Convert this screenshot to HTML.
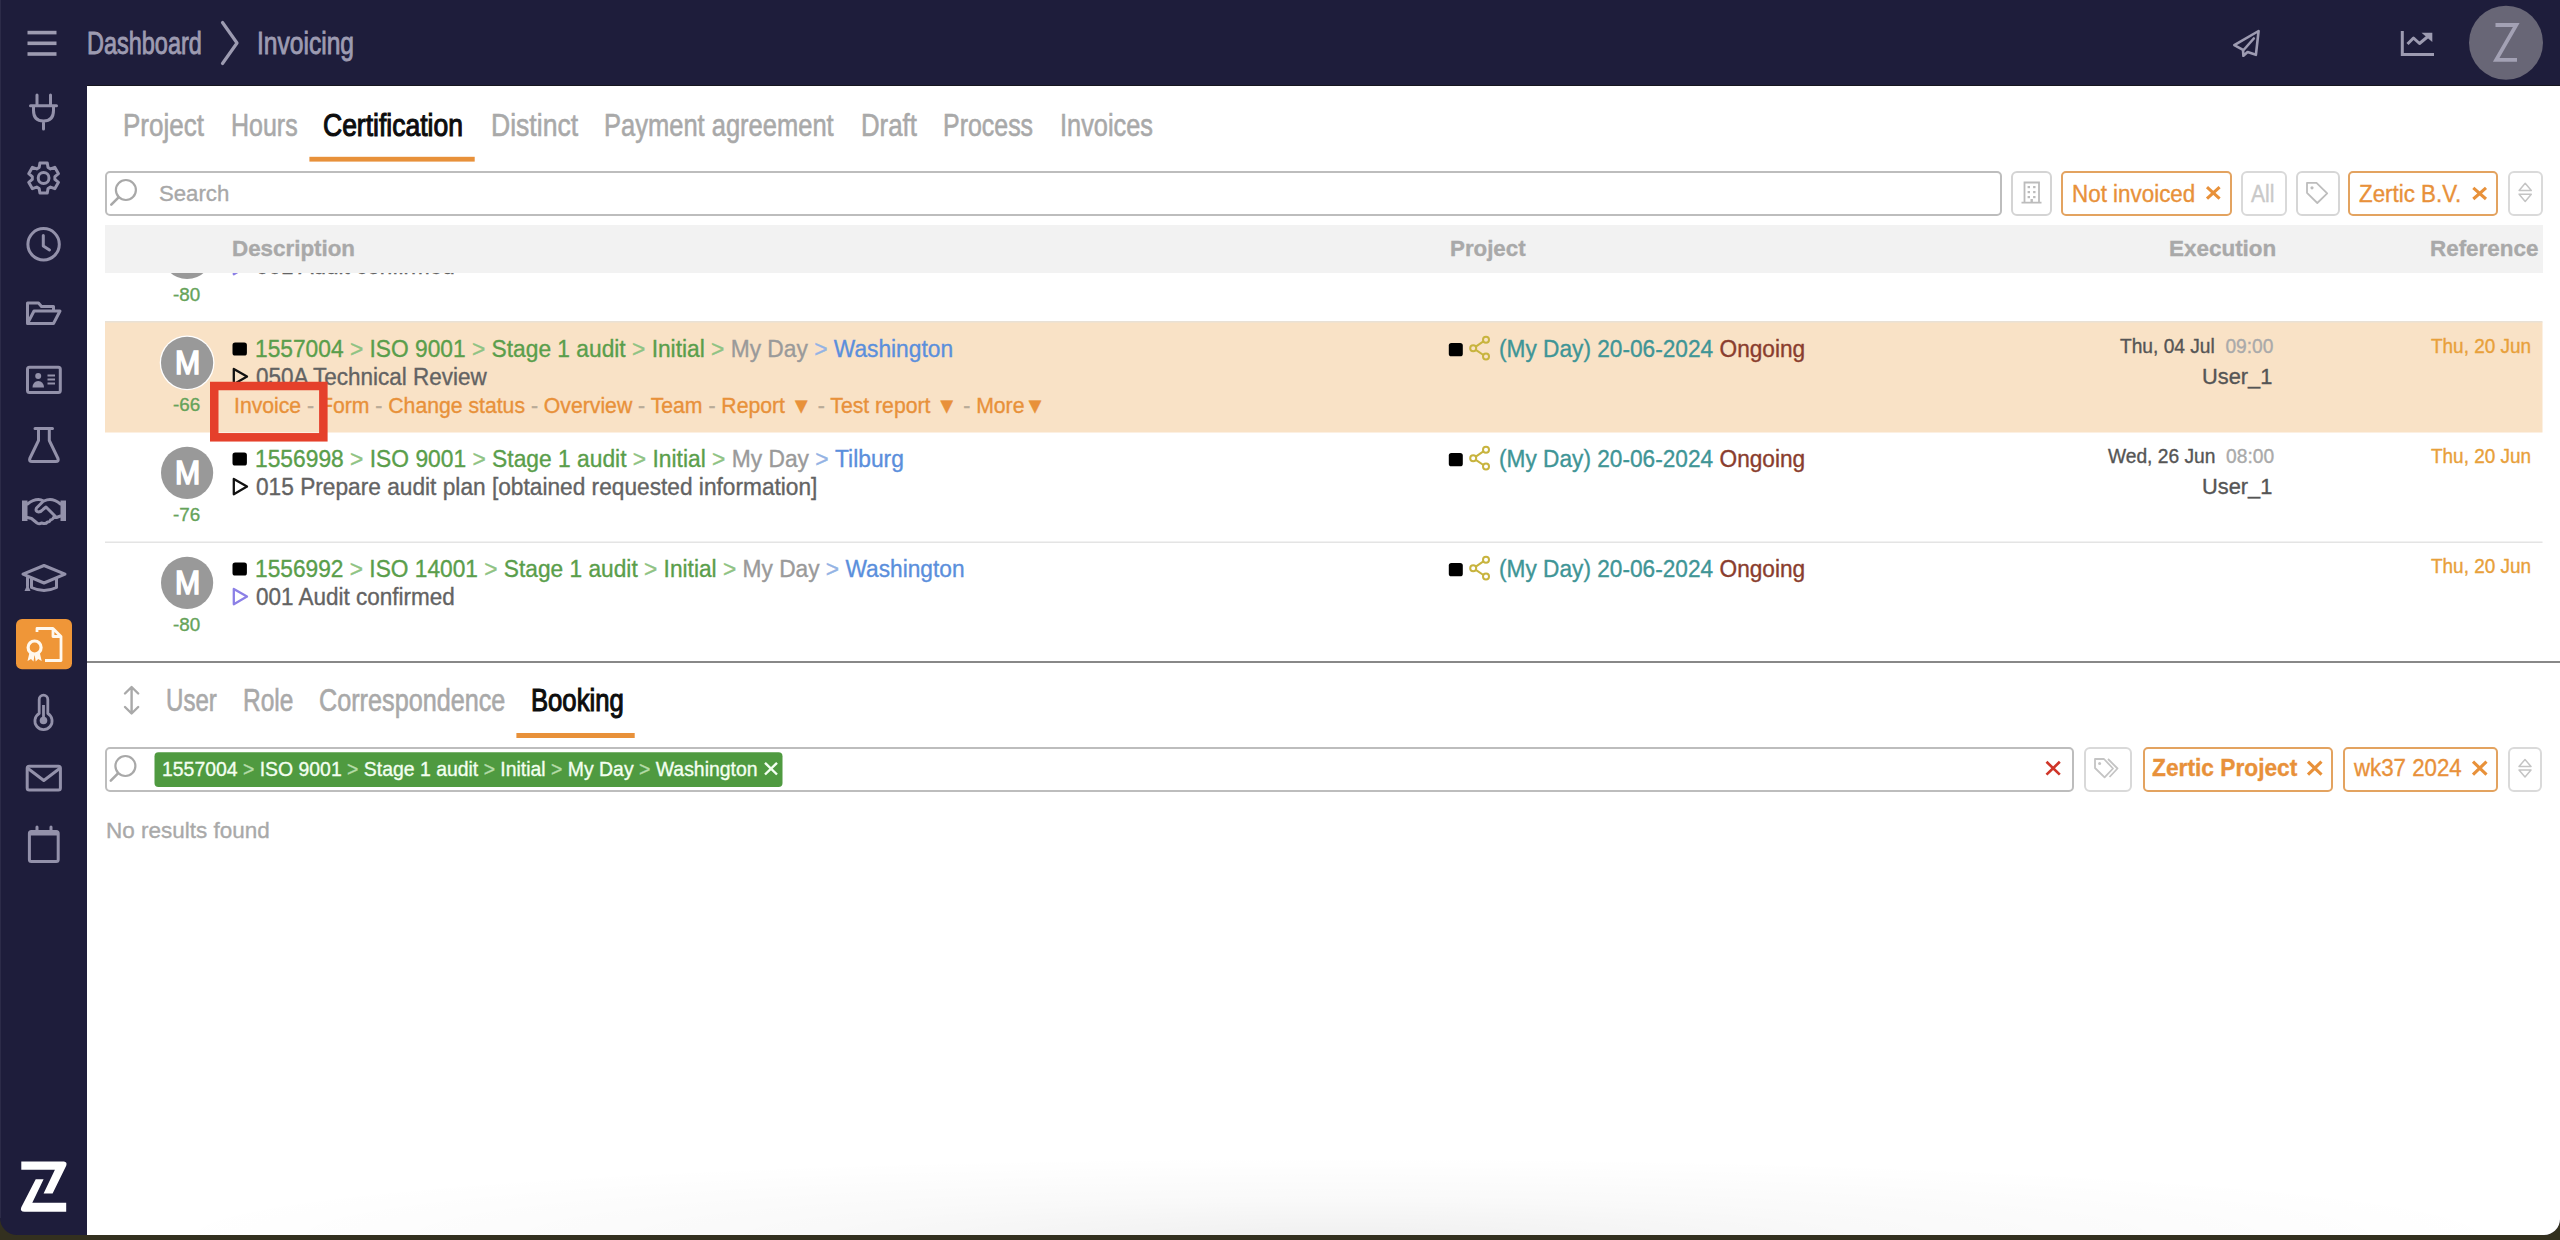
<!DOCTYPE html>
<html><head><meta charset="utf-8"><title>Invoicing</title><style>
*{margin:0;padding:0;box-sizing:content-box}
html,body{width:2560px;height:1240px;overflow:hidden;background:#33301f}
body{position:relative;font-family:"Liberation Sans",sans-serif}
.t{position:absolute;white-space:nowrap;line-height:1;transform-origin:0 0;-webkit-text-stroke-width:0.35px}
svg{position:absolute;left:0;top:0}
</style></head>
<body>
<div style="position:absolute;left:0;top:0;width:2560px;height:1235px;background:#1e1d3b;border-radius:0 0 16px 17px"></div>
<div style="position:absolute;left:0;top:0;width:1px;height:1218px;background:#2c2b48"></div><div style="position:absolute;left:87px;top:84.5px;width:2473px;height:1.5px;background:#17161f"></div>
<div style="position:absolute;left:87px;top:86px;width:2473px;height:1149px;background:#fff;border-radius:0 0 16px 0;overflow:hidden">
  <div style="position:absolute;left:100px;top:1070px;width:2300px;height:80px;background:radial-gradient(ellipse 52% 100% at 50% 100%,rgba(0,0,0,0.06) 0%,rgba(0,0,0,0.025) 45%,rgba(0,0,0,0) 100%)"></div>
</div>
<div style="position:absolute;left:105px;top:171px;width:1893.0px;height:40.5px;border:2px solid #bdbdbd;border-radius:5px;background:#fff"></div><div style="position:absolute;left:2011px;top:170.6px;width:37.0px;height:41.0px;border:2px solid #d4d4d4;border-radius:6px;background:#fff"></div><div style="position:absolute;left:2061px;top:171px;width:167.0px;height:40.5px;border:2px solid #e3a360;border-radius:5px;background:#fff"></div><div style="position:absolute;left:2241px;top:170.6px;width:42.0px;height:41.0px;border:2px solid #d9d9d9;border-radius:6px;background:#fff"></div><div style="position:absolute;left:2296px;top:170.6px;width:40.0px;height:41.0px;border:2px solid #d6d6d6;border-radius:6px;background:#fff"></div><div style="position:absolute;left:2348.4px;top:171px;width:145.8px;height:40.5px;border:2px solid #e3a360;border-radius:5px;background:#fff"></div><div style="position:absolute;left:2508px;top:170.6px;width:30.5px;height:41.0px;border:2px solid #dadada;border-radius:6px;background:#fff"></div><div style="position:absolute;left:105px;top:746.8px;width:1965.0px;height:41.0px;border:2px solid #bdbdbd;border-radius:5px;background:#fff"></div><div style="position:absolute;left:2084.2px;top:746.8px;width:44.1px;height:41.0px;border:2px solid #d9d9d9;border-radius:6px;background:#fff"></div><div style="position:absolute;left:2142.8px;top:746.8px;width:185.8px;height:41.0px;border:2px solid #e3a360;border-radius:5px;background:#fff"></div><div style="position:absolute;left:2343.2px;top:746.8px;width:150.7px;height:41.0px;border:2px solid #e3a360;border-radius:5px;background:#fff"></div><div style="position:absolute;left:2508.4px;top:746.8px;width:29.3px;height:41.0px;border:2px solid #dadada;border-radius:6px;background:#fff"></div>
<div style="position:absolute;left:0;top:225px;width:2560px;height:436px;overflow:hidden">
 <div style="position:absolute;left:0;top:-225px;width:2560px;height:1240px">
  <svg width="2560" height="1240" viewBox="0 0 2560 1240"><circle cx="187.1" cy="252.8" r="27.4" fill="#ffffff"/><circle cx="187.1" cy="252.8" r="26.1" fill="#999999"/><rect x="232.5" y="232.5" width="14.4" height="13" rx="2.6" fill="#000"/><path d="M233.8,259 L247,266.6 L233.8,274.2 Z" fill="none" stroke="#8c80e6" stroke-width="2.3" stroke-linejoin="round"/><rect x="1448.8" y="233" width="14" height="13.3" rx="2.6" fill="#000"/><g fill="none" stroke="#c8b43e" stroke-width="2"><circle cx="1486" cy="229.8" r="3"/><circle cx="1486" cy="246.5" r="3"/><circle cx="1473.2" cy="238.2" r="3"/><path d="M1475.8,236.6 L1483.4,231.4 M1475.8,239.8 L1483.4,245"/></g><rect x="105" y="322" width="2437.5" height="110.5" fill="#f9e2c6"/><rect x="105" y="321" width="2437.5" height="1.5" fill="#e9e1d6"/><circle cx="187.1" cy="362.8" r="27.4" fill="#ffffff"/><circle cx="187.1" cy="362.8" r="26.1" fill="#999999"/><rect x="232.5" y="342.5" width="14.4" height="13" rx="2.6" fill="#000"/><path d="M233.8,369 L247,376.6 L233.8,384.2 Z" fill="none" stroke="#111" stroke-width="2.3" stroke-linejoin="round"/><rect x="1448.8" y="343" width="14" height="13.3" rx="2.6" fill="#000"/><g fill="none" stroke="#c8b43e" stroke-width="2"><circle cx="1486" cy="339.8" r="3"/><circle cx="1486" cy="356.5" r="3"/><circle cx="1473.2" cy="348.2" r="3"/><path d="M1475.8,346.6 L1483.4,341.4 M1475.8,349.8 L1483.4,355"/></g><circle cx="187.1" cy="472.8" r="27.4" fill="#ffffff"/><circle cx="187.1" cy="472.8" r="26.1" fill="#999999"/><rect x="232.5" y="452.5" width="14.4" height="13" rx="2.6" fill="#000"/><path d="M233.8,479 L247,486.6 L233.8,494.2 Z" fill="none" stroke="#111" stroke-width="2.3" stroke-linejoin="round"/><rect x="1448.8" y="453" width="14" height="13.3" rx="2.6" fill="#000"/><g fill="none" stroke="#c8b43e" stroke-width="2"><circle cx="1486" cy="449.8" r="3"/><circle cx="1486" cy="466.5" r="3"/><circle cx="1473.2" cy="458.2" r="3"/><path d="M1475.8,456.6 L1483.4,451.4 M1475.8,459.8 L1483.4,465"/></g><rect x="105" y="541.5" width="2437.5" height="1.5" fill="#e4e4e4"/><circle cx="187.1" cy="582.8" r="27.4" fill="#ffffff"/><circle cx="187.1" cy="582.8" r="26.1" fill="#999999"/><rect x="232.5" y="562.5" width="14.4" height="13" rx="2.6" fill="#000"/><path d="M233.8,589 L247,596.6 L233.8,604.2 Z" fill="none" stroke="#8c80e6" stroke-width="2.3" stroke-linejoin="round"/><rect x="1448.8" y="563" width="14" height="13.3" rx="2.6" fill="#000"/><g fill="none" stroke="#c8b43e" stroke-width="2"><circle cx="1486" cy="559.8" r="3"/><circle cx="1486" cy="576.5" r="3"/><circle cx="1473.2" cy="568.2" r="3"/><path d="M1475.8,566.6 L1483.4,561.4 M1475.8,569.8 L1483.4,575"/></g></svg>
  <div class="t" style="left:174.50px;top:236.25px;font-size:33.5px;color:#ffffff;transform:scaleX(0.9045);-webkit-text-stroke:1.7px #fff">M</div><div class="t" style="left:173.20px;top:284.52px;font-size:19px;color:#66a35a;transform:scaleX(0.9907);">-80</div><div class="t" style="left:255.30px;top:228.18px;font-size:23.3px;color:#5a9e4b;transform:scaleX(0.9750);"><span style="color:#5a9e4b">1556992</span><span style="color:#8fc383">&nbsp;>&nbsp;</span><span style="color:#5a9e4b">ISO 14001</span><span style="color:#8fc383">&nbsp;>&nbsp;</span><span style="color:#5a9e4b">Stage 1 audit</span><span style="color:#8fc383">&nbsp;>&nbsp;</span><span style="color:#5a9e4b">Initial</span><span style="color:#8fc383">&nbsp;>&nbsp;</span><span style="color:#9a9a9a">My Day</span><span style="color:#94b3e4">&nbsp;>&nbsp;</span><span style="color:#5b8fdc">Washington</span></div><div class="t" style="left:256.00px;top:254.88px;font-size:23.3px;color:#636363;transform:scaleX(0.9650);">001 Audit confirmed</div><div class="t" style="left:1498.80px;top:227.58px;font-size:23.3px;color:#3f9596;transform:scaleX(0.9731);"><span style="color:#3f9596">(My Day) 20-06-2024</span> <span style="color:#8a3d2e">Ongoing</span></div><div class="t" style="left:2430.60px;top:226.90px;font-size:19.5px;color:#e8a03a;transform:scaleX(0.9713);">Thu, 20 Jun</div><div class="t" style="left:174.50px;top:346.25px;font-size:33.5px;color:#ffffff;transform:scaleX(0.9045);-webkit-text-stroke:1.7px #fff">M</div><div class="t" style="left:173.20px;top:394.52px;font-size:19px;color:#66a35a;transform:scaleX(0.9907);">-66</div><div class="t" style="left:255.30px;top:338.18px;font-size:23.3px;color:#5a9e4b;transform:scaleX(0.9766);"><span style="color:#5a9e4b">1557004</span><span style="color:#8fc383">&nbsp;>&nbsp;</span><span style="color:#5a9e4b">ISO 9001</span><span style="color:#8fc383">&nbsp;>&nbsp;</span><span style="color:#5a9e4b">Stage 1 audit</span><span style="color:#8fc383">&nbsp;>&nbsp;</span><span style="color:#5a9e4b">Initial</span><span style="color:#8fc383">&nbsp;>&nbsp;</span><span style="color:#9a9a9a">My Day</span><span style="color:#94b3e4">&nbsp;>&nbsp;</span><span style="color:#5b8fdc">Washington</span></div><div class="t" style="left:256.00px;top:366.18px;font-size:23.3px;color:#636363;transform:scaleX(0.9650);">050A Technical Review</div><div class="t" style="left:1498.80px;top:337.58px;font-size:23.3px;color:#3f9596;transform:scaleX(0.9731);"><span style="color:#3f9596">(My Day) 20-06-2024</span> <span style="color:#8a3d2e">Ongoing</span></div><div class="t" style="left:2120.30px;top:337.10px;font-size:19.5px;color:#555;transform:scaleX(0.9821);"><span style="color:#555">Thu, 04 Jul</span>&nbsp;&nbsp;<span style="color:#aaaaaa">09:00</span></div><div class="t" style="left:2202.40px;top:365.76px;font-size:22.5px;color:#555;transform:scaleX(0.9688);">User_1</div><div class="t" style="left:2430.60px;top:336.90px;font-size:19.5px;color:#e8a03a;transform:scaleX(0.9713);">Thu, 20 Jun</div><div class="t" style="left:233.50px;top:395.70px;font-size:21.5px;color:#e8913a;transform:scaleX(0.9859);"><span style="color:#e8913a">Invoice</span><span style="color:#b9ab98"> - </span><span style="color:#e8913a">Form</span><span style="color:#b9ab98"> - </span><span style="color:#e8913a">Change status</span><span style="color:#b9ab98"> - </span><span style="color:#e8913a">Overview</span><span style="color:#b9ab98"> - </span><span style="color:#e8913a">Team</span><span style="color:#b9ab98"> - </span><span style="color:#e8913a">Report ▼</span><span style="color:#b9ab98"> - </span><span style="color:#e8913a">Test report ▼</span><span style="color:#b9ab98"> - </span><span style="color:#e8913a">More▼</span></div><div class="t" style="left:174.50px;top:456.25px;font-size:33.5px;color:#ffffff;transform:scaleX(0.9045);-webkit-text-stroke:1.7px #fff">M</div><div class="t" style="left:173.20px;top:504.52px;font-size:19px;color:#66a35a;transform:scaleX(0.9907);">-76</div><div class="t" style="left:255.30px;top:448.18px;font-size:23.3px;color:#5a9e4b;transform:scaleX(0.9787);"><span style="color:#5a9e4b">1556998</span><span style="color:#8fc383">&nbsp;>&nbsp;</span><span style="color:#5a9e4b">ISO 9001</span><span style="color:#8fc383">&nbsp;>&nbsp;</span><span style="color:#5a9e4b">Stage 1 audit</span><span style="color:#8fc383">&nbsp;>&nbsp;</span><span style="color:#5a9e4b">Initial</span><span style="color:#8fc383">&nbsp;>&nbsp;</span><span style="color:#9a9a9a">My Day</span><span style="color:#94b3e4">&nbsp;>&nbsp;</span><span style="color:#5b8fdc">Tilburg</span></div><div class="t" style="left:256.00px;top:476.18px;font-size:23.3px;color:#636363;transform:scaleX(0.9741);">015 Prepare audit plan [obtained requested information]</div><div class="t" style="left:1498.80px;top:447.58px;font-size:23.3px;color:#3f9596;transform:scaleX(0.9731);"><span style="color:#3f9596">(My Day) 20-06-2024</span> <span style="color:#8a3d2e">Ongoing</span></div><div class="t" style="left:2107.50px;top:447.10px;font-size:19.5px;color:#555;transform:scaleX(0.9842);"><span style="color:#555">Wed, 26 Jun</span>&nbsp;&nbsp;<span style="color:#aaaaaa">08:00</span></div><div class="t" style="left:2202.40px;top:475.76px;font-size:22.5px;color:#555;transform:scaleX(0.9688);">User_1</div><div class="t" style="left:2430.60px;top:446.90px;font-size:19.5px;color:#e8a03a;transform:scaleX(0.9713);">Thu, 20 Jun</div><div class="t" style="left:174.50px;top:566.25px;font-size:33.5px;color:#ffffff;transform:scaleX(0.9045);-webkit-text-stroke:1.7px #fff">M</div><div class="t" style="left:173.20px;top:614.52px;font-size:19px;color:#66a35a;transform:scaleX(0.9907);">-80</div><div class="t" style="left:255.30px;top:558.18px;font-size:23.3px;color:#5a9e4b;transform:scaleX(0.9750);"><span style="color:#5a9e4b">1556992</span><span style="color:#8fc383">&nbsp;>&nbsp;</span><span style="color:#5a9e4b">ISO 14001</span><span style="color:#8fc383">&nbsp;>&nbsp;</span><span style="color:#5a9e4b">Stage 1 audit</span><span style="color:#8fc383">&nbsp;>&nbsp;</span><span style="color:#5a9e4b">Initial</span><span style="color:#8fc383">&nbsp;>&nbsp;</span><span style="color:#9a9a9a">My Day</span><span style="color:#94b3e4">&nbsp;>&nbsp;</span><span style="color:#5b8fdc">Washington</span></div><div class="t" style="left:256.00px;top:586.18px;font-size:23.3px;color:#636363;transform:scaleX(0.9650);">001 Audit confirmed</div><div class="t" style="left:1498.80px;top:557.58px;font-size:23.3px;color:#3f9596;transform:scaleX(0.9731);"><span style="color:#3f9596">(My Day) 20-06-2024</span> <span style="color:#8a3d2e">Ongoing</span></div><div class="t" style="left:2430.60px;top:556.90px;font-size:19.5px;color:#e8a03a;transform:scaleX(0.9713);">Thu, 20 Jun</div>
 </div>
</div>
<div style="position:absolute;left:105px;top:224.5px;width:2437.5px;height:48.5px;background:#f2f2f2"></div>
<div class="t" style="left:232.00px;top:237.96px;font-size:22.5px;color:#a9a9a9;font-weight:bold;transform:scaleX(0.9939);">Description</div><div class="t" style="left:1450.00px;top:237.96px;font-size:22.5px;color:#a9a9a9;font-weight:bold;transform:scaleX(0.9912);">Project</div><div class="t" style="left:2169.00px;top:237.96px;font-size:22.5px;color:#a9a9a9;font-weight:bold;transform:scaleX(0.9977);">Execution</div><div class="t" style="left:2429.60px;top:237.96px;font-size:22.5px;color:#a9a9a9;font-weight:bold;transform:scaleX(0.9964);">Reference</div>
<svg width="2560" height="1240" viewBox="0 0 2560 1240"><line x1="27.5" y1="32.6" x2="56.5" y2="32.6" stroke="#9d9bb1" stroke-width="3.6"/><line x1="27.5" y1="43.3" x2="56.5" y2="43.3" stroke="#9d9bb1" stroke-width="3.6"/><line x1="27.5" y1="54.0" x2="56.5" y2="54.0" stroke="#9d9bb1" stroke-width="3.6"/><polyline points="222.5,22.5 237,43 222.5,63.5" fill="none" stroke="#9d9bb1" stroke-width="3.2" stroke-linecap="round" stroke-linejoin="round"/><path d="M2258.6,31 L2234.3,45.2 L2243,49.8 L2243.4,55.8 L2247.6,52 L2255.9,54.8 Z M2253.8,38.5 L2243.6,50" fill="none" stroke="#9d9bb1" stroke-width="2.6" stroke-linejoin="round" stroke-linecap="round"/><polyline points="2402.3,31 2402.3,54.5 2434,54.5" fill="none" stroke="#9d9bb1" stroke-width="3"/><polyline points="2407.5,44 2413.5,38 2419.5,43.5 2428.5,36" fill="none" stroke="#9d9bb1" stroke-width="3" stroke-linejoin="round"/><polygon points="2421.5,32.8 2432.3,32.8 2432.3,42" fill="#9d9bb1"/><circle cx="2506" cy="42.7" r="37" fill="#686676"/><path d="M2495.5,25 H2516.3 L2496.2,59.8 H2517" fill="none" stroke="#a3a1b4" stroke-width="3.8"/><path d="M37,95 V104 M50.5,95 V104 M30.5,105.8 H56.5 M33.5,105.8 V110.5 Q33.5,121 43.5,121 Q53.5,121 53.5,110.5 V105.8 M43.5,121 V129" fill="none" stroke="#9391aa" stroke-width="3" stroke-linecap="round" stroke-linejoin="round"/><path d="M39.92,162.94 L47.28,162.94 L48.04,167.50 L50.47,168.91 L54.80,167.28 L58.48,173.66 L54.91,176.59 L54.91,179.41 L58.48,182.34 L54.80,188.72 L50.47,187.09 L48.04,188.50 L47.28,193.06 L39.92,193.06 L39.16,188.50 L36.73,187.09 L32.40,188.72 L28.72,182.34 L32.29,179.41 L32.29,176.59 L28.72,173.66 L32.40,167.28 L36.73,168.91 L39.16,167.50 Z" fill="none" stroke="#9391aa" stroke-width="3" stroke-linecap="round" stroke-linejoin="round"/><circle cx="43.6" cy="178" r="5.4" fill="none" stroke="#9391aa" stroke-width="3" stroke-linecap="round" stroke-linejoin="round"/><circle cx="43.6" cy="244.3" r="15.7" fill="none" stroke="#9391aa" stroke-width="3" stroke-linecap="round" stroke-linejoin="round"/><polyline points="43.3,235.5 43.3,246 49.5,250" fill="none" stroke="#9391aa" stroke-width="3" stroke-linecap="round" stroke-linejoin="round"/><path d="M27.5,323.5 V303 H38.5 L41.5,306.5 H53.5 V311 M27.5,323.5 L34,311 H60 L53.5,323.5 Z" fill="none" stroke="#9391aa" stroke-width="3" stroke-linecap="round" stroke-linejoin="round"/><rect x="27.5" y="367.3" width="32.8" height="25.3" rx="2" fill="none" stroke="#9391aa" stroke-width="3" stroke-linecap="round" stroke-linejoin="round"/><circle cx="38.2" cy="376" r="3" fill="#9391aa"/><path d="M32.5,387.5 Q33,381 38.2,381 Q43.5,381 44,387.5 Z" fill="#9391aa"/><path d="M47.5,375.5 H55 M47.5,379.5 H55 M47.5,383.5 H55" fill="none" stroke="#9391aa" stroke-width="2.2"/><path d="M35,428.5 H52.5 M38.5,428.5 V440.5 L29.8,458.5 Q28.8,461.5 32,461.5 H55.8 Q59,461.5 58,458.5 L49.3,440.5 V428.5" fill="none" stroke="#9391aa" stroke-width="3" stroke-linecap="round" stroke-linejoin="round"/><rect x="22" y="500.5" width="5.5" height="20.5" fill="#9391aa"/><rect x="60.5" y="500.5" width="5.5" height="20.5" fill="#9391aa"/><path d="M27.5,504 Q33,499.5 38.5,499.5 Q41,499.5 43.5,501 M44,501 Q47,499.5 50,499.5 Q55,499.5 60.5,504 M27.5,517.5 L31.5,518.5 L37,523 Q39.5,524.5 41.5,523 L43.5,523.5 Q46,524 47.5,522 Q50,522 50.5,520 Q53,519.5 53.5,517.5 L56.5,517.5 L60.5,516 M43.5,501 L36.5,508 Q35,511.5 38.5,512 Q41,512 43.5,509 L46,507 L55.5,516.5" fill="none" stroke="#9391aa" stroke-width="3" stroke-linecap="round" stroke-linejoin="round"/><path d="M23,574.2 L44,565.5 L65,574.2 L44,583 Z M31.5,578 V587.5 Q44,593.5 56.5,587.5 V578 M27.5,576 V586" fill="none" stroke="#9391aa" stroke-width="3" stroke-linecap="round" stroke-linejoin="round"/><path d="M27.5,584 L24.5,591 H30.5 Z" fill="#9391aa"/><rect x="16" y="619" width="56" height="50.3" rx="6" fill="#ef9638"/><path d="M37,632 V628.5 H53 L61,636.5 V660.5 H45 M53,628.5 V636.5 H61" fill="none" stroke="#fff8ee" stroke-width="2.8" stroke-linejoin="round"/><circle cx="34.6" cy="647.5" r="6.5" fill="none" stroke="#fff8ee" stroke-width="3.2"/><path d="M29.5,652.5 L27.5,661 L31,659 L33.5,661.5 L34.6,654.5 Z M39.7,652.5 L41.7,661 L38.2,659 L35.7,661.5 L34.6,654.5 Z" fill="#fff8ee"/><path d="M39.2,713.5 V699.5 A4.3,4.3 0 0 1 47.8,699.5 V713.5 A8.6,8.6 0 1 1 39.2,713.5 Z" fill="none" stroke="#9391aa" stroke-width="2.8" stroke-linejoin="round"/><circle cx="43.5" cy="720.5" r="3.8" fill="#9391aa"/><line x1="43.5" y1="705" x2="43.5" y2="719" stroke="#9391aa" stroke-width="2.8"/><rect x="27.2" y="766.3" width="33.2" height="23.6" rx="2" fill="none" stroke="#9391aa" stroke-width="3" stroke-linecap="round" stroke-linejoin="round"/><polyline points="28,768.5 43.8,780.5 59.6,768.5" fill="none" stroke="#9391aa" stroke-width="3" stroke-linecap="round" stroke-linejoin="round"/><rect x="29.4" y="831.5" width="28.8" height="30" rx="2" fill="none" stroke="#9391aa" stroke-width="3" stroke-linecap="round" stroke-linejoin="round"/><path d="M29.4,833.5 H58.2" stroke="#9391aa" stroke-width="4"/><path d="M37,827 V833 M51,827 V833" fill="none" stroke="#9391aa" stroke-width="3" stroke-linecap="round" stroke-linejoin="round"/><path d="M21.3,1161.6 H63.9 Q67.5,1162 66.2,1165.8 L52.6,1193.5 H43.6 L54.9,1169.75 H21.3 Z" fill="#ffffff"/><path d="M35.7,1179.3 H43.6 L32.3,1202.8 H66.2 V1211.8 H24.6 Q19.5,1211.5 21.3,1207.2 Z" fill="#ffffff"/><rect x="309.4" y="156.8" width="165.3" height="4.8" fill="#e8913a"/><circle cx="125.9" cy="190" r="10" fill="none" stroke="#a8a8a8" stroke-width="2.2"/><line x1="118.6" y1="197.3" x2="111.3" y2="204.6" stroke="#a8a8a8" stroke-width="2.6" stroke-linecap="round"/><path d="M2024.5,202.5 V182.5 H2039 V202.5 M2021.5,202.6 H2041.5" fill="none" stroke="#bcbcbc" stroke-width="1.8"/><rect x="2027.6" y="186" width="2.4" height="2.2" fill="#bcbcbc"/><rect x="2033.1" y="186" width="2.4" height="2.2" fill="#bcbcbc"/><rect x="2027.6" y="191" width="2.4" height="2.2" fill="#bcbcbc"/><rect x="2033.1" y="191" width="2.4" height="2.2" fill="#bcbcbc"/><rect x="2027.6" y="196" width="2.4" height="2.2" fill="#bcbcbc"/><rect x="2033.1" y="196" width="2.4" height="2.2" fill="#bcbcbc"/><rect x="2030.5" y="199" width="2.4" height="3.5" fill="#bcbcbc"/><path d="M2207,187.2 L2219.6,198.6 M2219.6,187.2 L2207,198.6" stroke="#e8913a" stroke-width="3.1" stroke-linecap="butt"/><path d="M2307,182.8 H2316.5 L2327.2,193.3 L2317.3,203 L2307,192.8 Z" fill="none" stroke="#bdbdbd" stroke-width="1.8" stroke-linejoin="round"/><circle cx="2312" cy="187.8" r="1.6" fill="#bdbdbd"/><path d="M2473.3,187.8 L2486,199 M2486,187.8 L2473.3,199" stroke="#e8913a" stroke-width="3.1" stroke-linecap="butt"/><path d="M2525.2,183.3 L2531.3,190.5 H2519.1 Z M2519.1,194.2 H2531.3 L2525.2,201.5 Z" fill="none" stroke="#c4c4c4" stroke-width="1.5" stroke-linejoin="round"/><rect x="87" y="661" width="2473" height="2" fill="#888888"/><path d="M131.6,687.5 V713 M125,693.5 L131.6,687 L138.2,693.5 M125,707 L131.6,713.5 L138.2,707" fill="none" stroke="#a9a9a9" stroke-width="2.4" stroke-linecap="round" stroke-linejoin="round"/><rect x="516.4" y="733" width="118.3" height="5" fill="#e8913a"/><circle cx="125.4" cy="766" r="10" fill="none" stroke="#a8a8a8" stroke-width="2.2"/><line x1="118" y1="773.4" x2="110.8" y2="780.6" stroke="#a8a8a8" stroke-width="2.6" stroke-linecap="round"/><rect x="154.5" y="752.3" width="628" height="34.6" rx="4" fill="#4f9a40"/><path d="M765,762.8 L777,774.5 M777,762.8 L765,774.5" stroke="#f3fff0" stroke-width="2.4" stroke-linecap="butt"/><path d="M2046.5,761.8 L2059.8,774.6 M2059.8,761.8 L2046.5,774.6" stroke="#cf3528" stroke-width="2.7" stroke-linecap="butt"/><path d="M2095,759 H2104 L2113,768.5 L2104.6,777.3 L2095,768 Z M2108,759 L2117.5,768.5 L2109.5,777" fill="none" stroke="#c4c4c4" stroke-width="1.8" stroke-linejoin="round"/><circle cx="2099.6" cy="763.6" r="1.5" fill="#c4c4c4"/><path d="M2308,761.6 L2321.5,774.6 M2321.5,761.6 L2308,774.6" stroke="#e8913a" stroke-width="3.1" stroke-linecap="butt"/><path d="M2473,761.6 L2486.5,774.6 M2486.5,761.6 L2473,774.6" stroke="#e8913a" stroke-width="3.1" stroke-linecap="butt"/><path d="M2525,759.5 L2531,766.5 H2519 Z M2519,770 H2531 L2525,777 Z" fill="none" stroke="#c4c4c4" stroke-width="1.5" stroke-linejoin="round"/><rect x="214.25" y="386" width="109.1" height="51.3" fill="none" stroke="#e5402b" stroke-width="8.5"/></svg>
<div class="t" style="left:86.70px;top:28.04px;font-size:31.5px;color:#9d9bb1;transform:scaleX(0.7453);-webkit-text-stroke:0.9px #9d9bb1">Dashboard</div><div class="t" style="left:257.00px;top:28.04px;font-size:31.5px;color:#9d9bb1;transform:scaleX(0.7806);-webkit-text-stroke:0.9px #9d9bb1">Invoicing</div><div class="t" style="left:123.40px;top:108.82px;font-size:32px;color:#a9a9a9;transform:scaleX(0.8139);-webkit-text-stroke:0.6px #a9a9a9">Project</div><div class="t" style="left:231.00px;top:108.82px;font-size:32px;color:#a9a9a9;transform:scaleX(0.7807);-webkit-text-stroke:0.6px #a9a9a9">Hours</div><div class="t" style="left:323.40px;top:108.82px;font-size:32px;color:#0d0d0d;transform:scaleX(0.8280);-webkit-text-stroke:1.1px #0d0d0d">Certification</div><div class="t" style="left:490.60px;top:108.82px;font-size:32px;color:#a9a9a9;transform:scaleX(0.8298);-webkit-text-stroke:0.6px #a9a9a9">Distinct</div><div class="t" style="left:604.20px;top:108.82px;font-size:32px;color:#a9a9a9;transform:scaleX(0.7971);-webkit-text-stroke:0.6px #a9a9a9">Payment agreement</div><div class="t" style="left:860.60px;top:108.82px;font-size:32px;color:#a9a9a9;transform:scaleX(0.8054);-webkit-text-stroke:0.6px #a9a9a9">Draft</div><div class="t" style="left:943.00px;top:108.82px;font-size:32px;color:#a9a9a9;transform:scaleX(0.7791);-webkit-text-stroke:0.6px #a9a9a9">Process</div><div class="t" style="left:1060.00px;top:108.82px;font-size:32px;color:#a9a9a9;transform:scaleX(0.7919);-webkit-text-stroke:0.6px #a9a9a9">Invoices</div><div class="t" style="left:159.40px;top:181.90px;font-size:22.8px;color:#a8a8a8;transform:scaleX(0.9727);">Search</div><div class="t" style="left:2071.70px;top:182.53px;font-size:23px;color:#e8913a;transform:scaleX(0.9738);">Not invoiced</div><div class="t" style="left:2251.40px;top:182.53px;font-size:23px;color:#c9c9c9;transform:scaleX(0.9205);">All</div><div class="t" style="left:2358.80px;top:182.53px;font-size:23px;color:#e8913a;transform:scaleX(0.9713);">Zertic B.V.</div><div class="t" style="left:166.20px;top:684.68px;font-size:30.5px;color:#a9a9a9;transform:scaleX(0.7894);-webkit-text-stroke:0.6px #a9a9a9">User</div><div class="t" style="left:242.90px;top:684.68px;font-size:30.5px;color:#a9a9a9;transform:scaleX(0.8041);-webkit-text-stroke:0.6px #a9a9a9">Role</div><div class="t" style="left:319.00px;top:684.68px;font-size:30.5px;color:#a9a9a9;transform:scaleX(0.8264);-webkit-text-stroke:0.6px #a9a9a9">Correspondence</div><div class="t" style="left:531.00px;top:684.68px;font-size:30.5px;color:#0d0d0d;transform:scaleX(0.8408);-webkit-text-stroke:1.1px #0d0d0d">Booking</div><div class="t" style="left:161.60px;top:758.82px;font-size:20.3px;color:#f3fff0;transform:scaleX(0.9570);"><span style="color:#f3fff0">1557004</span><span style="color:#b5dca9">&nbsp;>&nbsp;</span><span style="color:#f3fff0">ISO&nbsp;9001</span><span style="color:#b5dca9">&nbsp;>&nbsp;</span><span style="color:#f3fff0">Stage&nbsp;1&nbsp;audit</span><span style="color:#b5dca9">&nbsp;>&nbsp;</span><span style="color:#f3fff0">Initial</span><span style="color:#b5dca9">&nbsp;>&nbsp;</span><span style="color:#f3fff0">My&nbsp;Day</span><span style="color:#b5dca9">&nbsp;>&nbsp;</span><span style="color:#f3fff0">Washington</span></div><div class="t" style="left:2152.20px;top:757.48px;font-size:23.3px;color:#e8913a;font-weight:bold;transform:scaleX(0.9759);">Zertic Project</div><div class="t" style="left:2353.81px;top:757.48px;font-size:23.3px;color:#e8913a;transform:scaleX(0.9559);">wk37 2024</div><div class="t" style="left:105.80px;top:820.16px;font-size:22.5px;color:#a9a9a9;transform:scaleX(0.9988);">No results found</div>
</body></html>
